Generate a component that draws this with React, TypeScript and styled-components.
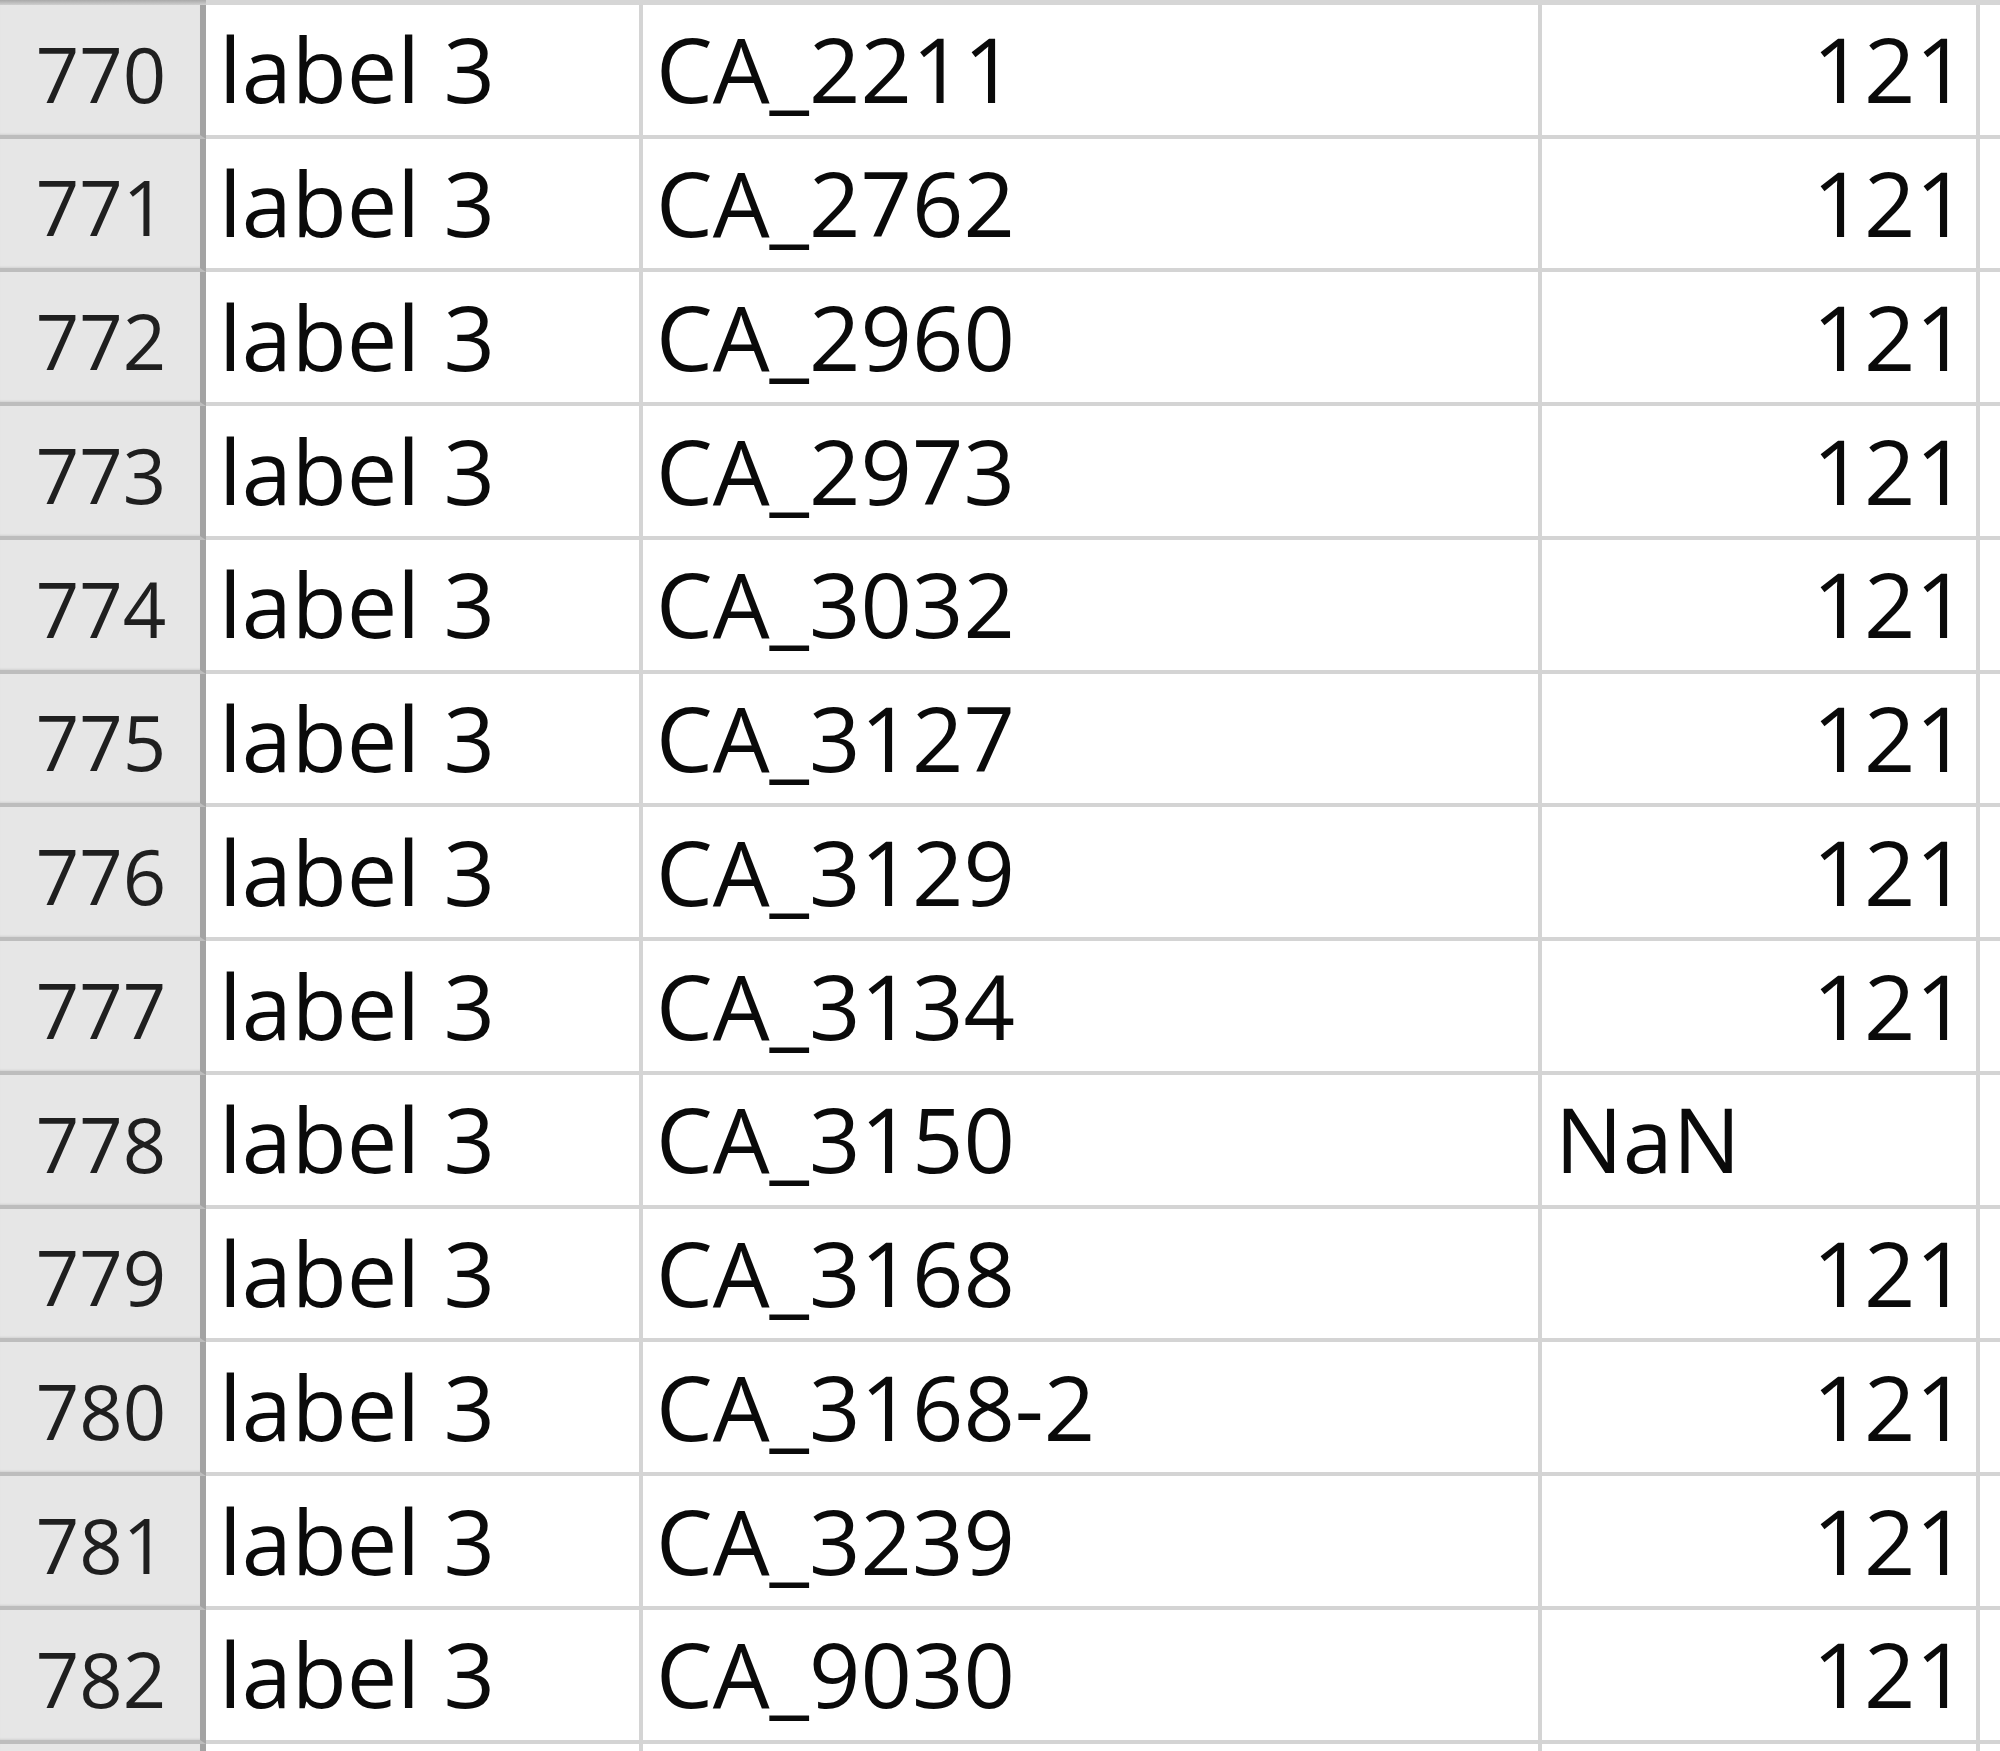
import React from "react"
import styled, { createGlobalStyle } from "styled-components"

const GlobalStyle = createGlobalStyle`
  html, body {
    margin: 0;
    padding: 0;
    background: #ffffff;
    overflow: hidden;
  }
`

const COLUMNS = "206px 437px 899px 438px 20px"

const Sheet = styled.div`
  width: 2000px;
  height: 1751px;
  overflow: hidden;
  font-family: "Open Sans", "Noto Sans", sans-serif;
`

const TopEdge = styled.div`
  display: grid;
  grid-template-columns: ${COLUMNS};
  height: 4.75px;
`

const EdgePiece = styled.div<{ $header?: boolean }>`
  background: ${(p) =>
    p.$header
      ? "linear-gradient(#a9a9a9, #cfcfcf)"
      : "#d6d6d6"};
`

const Row = styled.div`
  display: grid;
  grid-template-columns: ${COLUMNS};
  height: 133.75px;
`

const RowHeader = styled.div`
  box-sizing: border-box;
  display: flex;
  align-items: flex-end;
  justify-content: center;
  background: #e6e6e6;
  border-right: 6px solid #a3a3a3;
  border-bottom: 4px solid #bdbdbd;
  box-shadow: inset 0 -2px 2px -1px #d2d2d2;
  padding: 0 0 22.8px 2px;
  font-size: 76px;
  line-height: 76px;
  color: #1f1f1f;
`

const Cell = styled.div<{ $align?: "left" | "right" }>`
  box-sizing: border-box;
  display: flex;
  align-items: flex-end;
  justify-content: ${(p) => (p.$align === "right" ? "flex-end" : "flex-start")};
  background: #ffffff;
  border-right: 4px solid #d4d4d4;
  border-bottom: 4px solid #d4d4d4;
  padding: 0 9px 21.2px 13px;
  font-size: 90px;
  line-height: 90px;
  color: #0a0a0a;
  white-space: nowrap;
  overflow: hidden;
`

const FillerCell = styled(Cell)`
  border-right: none;
`

type Item = { n: number; code: string; value: number | null }

const items: Item[] = [
  { n: 770, code: "CA_2211", value: 121 },
  { n: 771, code: "CA_2762", value: 121 },
  { n: 772, code: "CA_2960", value: 121 },
  { n: 773, code: "CA_2973", value: 121 },
  { n: 774, code: "CA_3032", value: 121 },
  { n: 775, code: "CA_3127", value: 121 },
  { n: 776, code: "CA_3129", value: 121 },
  { n: 777, code: "CA_3134", value: 121 },
  { n: 778, code: "CA_3150", value: null },
  { n: 779, code: "CA_3168", value: 121 },
  { n: 780, code: "CA_3168-2", value: 121 },
  { n: 781, code: "CA_3239", value: 121 },
  { n: 782, code: "CA_9030", value: 121 },
]

function App() {
  return (
    <>
      <GlobalStyle />
      <Sheet>
        <TopEdge>
          <EdgePiece $header />
          <EdgePiece />
          <EdgePiece />
          <EdgePiece />
          <EdgePiece />
        </TopEdge>
        {items.map((it) => (
          <Row key={it.n}>
            <RowHeader>{it.n}</RowHeader>
            <Cell>label 3</Cell>
            <Cell>{it.code}</Cell>
            {it.value === null ? (
              <Cell>NaN</Cell>
            ) : (
              <Cell $align="right">{it.value}</Cell>
            )}
            <FillerCell />
          </Row>
        ))}
        <Row>
          <RowHeader />
          <Cell />
          <Cell />
          <Cell />
          <FillerCell />
        </Row>
      </Sheet>
    </>
  )
}

export default App
